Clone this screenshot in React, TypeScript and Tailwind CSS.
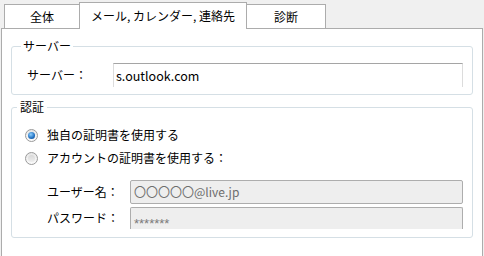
const font = { fontFamily: '"Noto Sans CJK JP", "Noto Sans", sans-serif' };

function Tab({ label, active, w }: { label: string; active?: boolean; w: string }) {
  return (
    <div
      className={
        active
          ? `${w} relative z-10 -mb-px h-[27px] border border-b-0 border-[#acacac] bg-white flex items-center justify-center`
          : `${w} h-[24px] border border-b-0 border-[#acacac] bg-white flex items-center justify-center`
      }
    >
      <span className="text-[12px] leading-[14px] text-black">{label}</span>
    </div>
  );
}

function Radio({ checked }: { checked?: boolean }) {
  return (
    <div className="w-[13px] h-[13px] rounded-full border border-[#9a9a9a] bg-gradient-to-b from-[#e6e6e6] to-[#fbfbfb] flex items-center justify-center">
      {checked ? (
        <div className="w-[7px] h-[7px] rounded-full bg-[radial-gradient(circle_at_40%_35%,#8fd0ff,#1f6fc0_60%,#0e3f7d)]" />
      ) : (
        <div className="w-[7px] h-[7px] rounded-full bg-gradient-to-b from-[#d8d8d8] to-[#eeeeee]" />
      )}
    </div>
  );
}

export default function App() {
  return (
    <div className="w-[484px] h-[256px] overflow-hidden bg-[#f0f0f0] text-black" style={font}>
      <div className="h-[28px] flex items-end pl-[4px]">
        <Tab label="全体" w="w-[76px]" />
        <Tab label="メール, カレンダー, 連絡先" w="w-[168px] -ml-px" active />
        <Tab label="診断" w="w-[80px] -ml-px" />
      </div>

      <div className="ml-[1px] w-[482px] h-[240px] border border-[#acacac] bg-white px-[9px] pt-[10px]">
        <fieldset className="border border-[#d5dfe5] rounded-[3px] pr-[9px] pb-[7px]">
          <legend className="ml-[9px] px-[2px] text-[12px] leading-[14px]">サーバー</legend>
          <div className="flex items-center pt-[10px]">
            <span className="w-[101px] pl-[15px] text-[12px] leading-[14px]">サーバー：</span>
            <div className="flex-1 h-[24px] border-t border-x border-t-[#a5a5a5] border-x-[#dcdcdc] flex items-center pl-[2px]">
              <span className="text-[12.5px] leading-[14px]">s.outlook.com</span>
            </div>
          </div>
        </fieldset>

        <fieldset className="mt-[5px] border border-[#d5dfe5] rounded-[3px] pr-[9px] pb-[8px]">
          <legend className="ml-[5px] px-[3px] text-[12px] leading-[14px]">認証</legend>
          <div className="pt-[11px] flex flex-col gap-[3px]">
            <div className="h-[20px] flex items-center pl-[13px] gap-[9px]">
              <Radio checked />
              <span className="text-[12px] leading-[14px]">独自の証明書を使用する</span>
            </div>
            <div className="h-[20px] flex items-center pl-[13px] gap-[9px]">
              <Radio />
              <span className="text-[12px] leading-[14px]">アカウントの証明書を使用する：</span>
            </div>
          </div>
          <div className="mt-[12px] flex flex-col gap-[3px] pl-[35px]">
            <div className="flex items-center">
              <span className="w-[83px] text-[12px] leading-[14px]">ユーザー名：</span>
              <div className="flex-1 h-[24px] rounded-[2px] border border-[#adadad] bg-[#eeeeee] flex items-center pl-[3px]">
                <span className="text-[12px] leading-[14px] text-[#6d6d6d]">〇〇〇〇〇@live.jp</span>
              </div>
            </div>
            <div className="flex items-start">
              <span className="w-[83px] pt-[4px] text-[12px] leading-[14px]">パスワード：</span>
              <div className="flex-1 h-[22px] rounded-t-[2px] border border-b-0 border-[#adadad] bg-[#eeeeee] pl-[3px] pt-[1px]">
                <span className="font-['Liberation_Sans',sans-serif] text-[13px] leading-[14px] text-[#7a7a7a]">*******</span>
              </div>
            </div>
          </div>
        </fieldset>
      </div>
    </div>
  );
}
